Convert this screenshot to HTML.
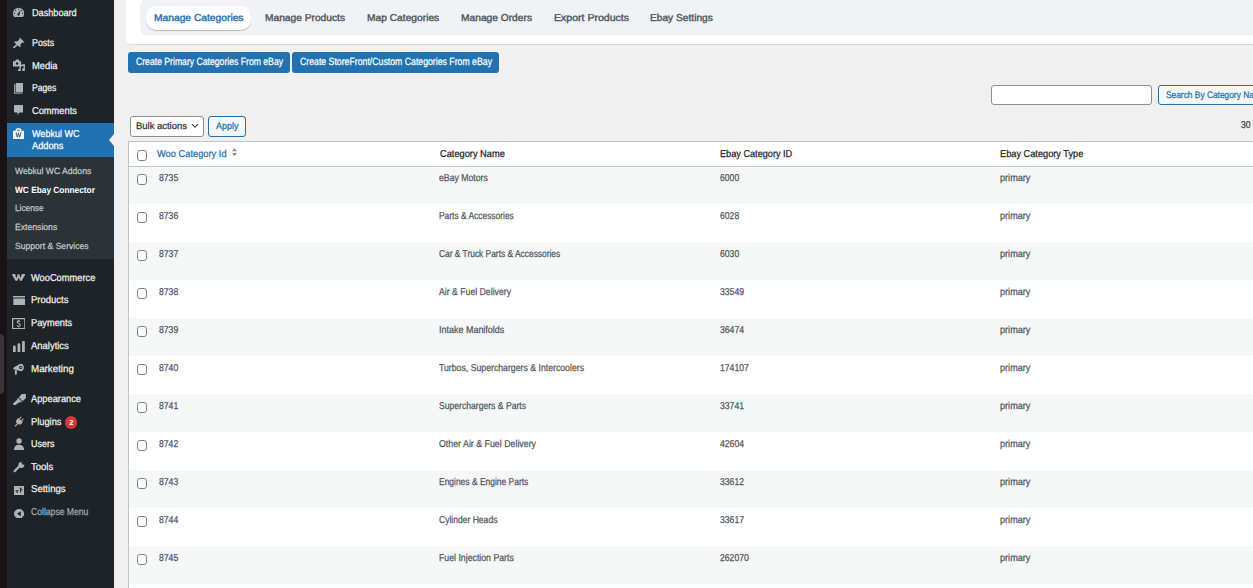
<!DOCTYPE html><html><head><meta charset="utf-8"><style>
*{margin:0;padding:0;box-sizing:border-box}
html,body{width:1253px;height:588px;overflow:hidden;background:#f0f0f1;font-family:"Liberation Sans", sans-serif;text-rendering:geometricPrecision}
.t{position:absolute;white-space:nowrap;-webkit-text-stroke:0.25px currentColor}
.ic{position:absolute;line-height:0}
.b{position:absolute}
svg{display:block}
</style></head><body><div class="b" style="left:0;top:0;width:6px;height:588px;background:#1a1115"></div><div class="b" style="left:0;top:334px;width:4px;height:60px;background:#3a3438;border-radius:0 4px 4px 0"></div><div class="b" style="left:6px;top:0;width:108px;height:588px;background:#1d2327"></div><div class="b" style="left:6px;top:0;width:1px;height:588px;background:#14181b"></div><div class="b" style="left:7px;top:122.5px;width:107px;height:34.5px;background:#2271b1"></div><div class="b" style="left:7px;top:157px;width:107px;height:102px;background:#2c3338"></div><div class="b" style="left:108.5px;top:134px;width:0;height:0;border-top:6px solid transparent;border-bottom:6px solid transparent;border-right:5.5px solid #f0f0f1"></div><div class="ic" style="left:13px;top:6.9px"><svg width="11.2" height="10" viewBox="0 0 20 18" preserveAspectRatio="none"><path fill="#b0b3b6" d="M2.2 18C.8 16.2 0 14 0 11.2A10 10 0 0 1 20 11.2C20 14 19.2 16.2 17.8 18Z"/><g fill="#1d2327"><circle cx="10" cy="3.6" r="1.1"/><circle cx="4.6" cy="6" r="1.1"/><circle cx="15.4" cy="6" r="1.1"/><circle cx="2.8" cy="11.2" r="1.1"/><circle cx="17.2" cy="11.2" r="1.1"/><path d="M13.8 5.2L11.6 13.4A1.9 1.9 0 1 1 8.4 12.2Z"/></g></svg></div><div class="t" style="left:31.6px;top:8.54px;font-size:10px;line-height:10px;color:#f0f0f1;font-weight:normal;transform:scaleX(0.9137);transform-origin:0 0;">Dashboard</div><div class="ic" style="left:12.6px;top:36.9px"><svg width="12.2" height="11.5" viewBox="0 0 20 20" preserveAspectRatio="none"><path fill="#b0b3b6" d="M11 1l8 8-2 1-1-1-4 4 .5 3.5L11 18l-3.5-3.5L2 20H0v-2l5.5-5.5L2 9l1.5-1.5L7 8l4-4-1-1z"/></svg></div><div class="t" style="left:31.6px;top:38.73px;font-size:10px;line-height:10px;color:#f0f0f1;font-weight:normal;transform:scaleX(0.8837);transform-origin:0 0;">Posts</div><div class="ic" style="left:12.75px;top:59px"><svg width="12.3" height="12.3" viewBox="0 0 20 20" preserveAspectRatio="none"><path fill="#b0b3b6" d="M0 3.5h3.2L5 1h4.2l1.8 2.5h2.2V12H0z"/><circle cx="6.6" cy="7.2" r="2" fill="#1d2327"/><path fill="#b0b3b6" d="M10.6 9.8L19.4 8.2V17.2A2.3 2.3 0 1 1 17.2 15.2V11.4L12.8 12.2V18A2.3 2.3 0 1 1 10.6 16z"/></svg></div><div class="t" style="left:31.6px;top:61.73px;font-size:10px;line-height:10px;color:#f0f0f1;font-weight:normal;transform:scaleX(0.9326);transform-origin:0 0;">Media</div><div class="ic" style="left:13.9px;top:83px"><svg width="9.3" height="11" viewBox="0 0 18 22" preserveAspectRatio="none"><path fill="#b0b3b6" d="M3.5 0H18V19H3.5z"/><path fill="#b0b3b6" d="M0 2.5H2.5V20.5H16V22H0z" opacity=".85"/></svg></div><div class="t" style="left:31.6px;top:84.03px;font-size:10px;line-height:10px;color:#f0f0f1;font-weight:normal;transform:scaleX(0.8605);transform-origin:0 0;">Pages</div><div class="ic" style="left:13.9px;top:104.8px"><svg width="9.3" height="10.3" viewBox="0 0 20 22" preserveAspectRatio="none"><path fill="#b0b3b6" d="M2 0H18A2 2 0 0 1 20 2V14A2 2 0 0 1 18 16H11.5L7.5 22V16H2A2 2 0 0 1 0 14V2A2 2 0 0 1 2 0z"/></svg></div><div class="t" style="left:31.6px;top:106.53px;font-size:10px;line-height:10px;color:#f0f0f1;font-weight:normal;transform:scaleX(0.9287);transform-origin:0 0;">Comments</div><div class="ic" style="left:13px;top:128.3px"><svg width="11" height="11" viewBox="0 0 20 20" preserveAspectRatio="none"><path fill="#f4f8fb" d="M4.5 5A5.5 4.8 0 0 1 15.5 5H20V20H0V5zM7.3 5H12.7A2.7 2.3 0 0 0 7.3 5z"/><path fill="#4d6376" d="M4.6 8.2H6.8L8 14.6L9.3 8.2H10.9L12.2 14.6L13.4 8.2H15.4L13.3 17H11.3L10.1 11.6L8.9 17H6.8z"/></svg></div><div class="t" style="left:31.6px;top:129.84px;font-size:10px;line-height:10px;color:#fff;font-weight:normal;transform:scaleX(0.9030);transform-origin:0 0;">Webkul WC</div><div class="t" style="left:31.6px;top:141.84px;font-size:10px;line-height:10px;color:#fff;font-weight:normal;transform:scaleX(0.9258);transform-origin:0 0;">Addons</div><div class="t" style="left:15.1px;top:167.38px;font-size:9px;line-height:9px;color:rgba(240,246,252,.7);font-weight:normal;transform:scaleX(0.9540);transform-origin:0 0;">Webkul WC Addons</div><div class="t" style="left:15.1px;top:186.38px;font-size:9px;line-height:9px;color:#fff;font-weight:bold;transform:scaleX(0.9236);transform-origin:0 0;-webkit-text-stroke:0;">WC Ebay Connector</div><div class="t" style="left:15.1px;top:204.38px;font-size:9px;line-height:9px;color:rgba(240,246,252,.7);font-weight:normal;transform:scaleX(0.9220);transform-origin:0 0;">License</div><div class="t" style="left:15.1px;top:223.38px;font-size:9px;line-height:9px;color:rgba(240,246,252,.7);font-weight:normal;transform:scaleX(0.9586);transform-origin:0 0;">Extensions</div><div class="t" style="left:15.1px;top:241.88px;font-size:9px;line-height:9px;color:rgba(240,246,252,.7);font-weight:normal;transform:scaleX(0.9554);transform-origin:0 0;">Support &amp; Services</div><div class="ic" style="left:11.8px;top:274px"><svg width="13.2" height="7" viewBox="0 0 26 14" preserveAspectRatio="none"><path fill="#b0b3b6" d="M.8 3.2C-.2 1.2.8 0 2.8 0H6.2L8.3 8.4L11.6 .6H14.8L16.2 8.4L19.6 0H24.6C25.8 0 26.2 1 25.6 2.2L19.2 13.4H15.6L13.6 6.8L10.4 13.4H7Z"/></svg></div><div class="t" style="left:31.4px;top:273.54px;font-size:10px;line-height:10px;color:#f0f0f1;font-weight:normal;transform:scaleX(0.9281);transform-origin:0 0;">WooCommerce</div><div class="ic" style="left:12.9px;top:296.2px"><svg width="12.5" height="8.9" viewBox="0 0 20 14" preserveAspectRatio="none"><path fill="#b0b3b6" d="M0 0H20V2.4H0zM.6 4H19.4V14H.6z"/></svg></div><div class="t" style="left:31.4px;top:296.34px;font-size:10px;line-height:10px;color:#f0f0f1;font-weight:normal;transform:scaleX(0.9477);transform-origin:0 0;">Products</div><div class="ic" style="left:11.7px;top:317.6px"><svg width="13.5" height="11.3" viewBox="0 0 24 20" preserveAspectRatio="none"><path fill="none" stroke="#b0b3b6" stroke-width="2.2" d="M1.1 1.1H22.9V18.9H1.1z"/><path fill="none" stroke="#b0b3b6" stroke-width="2" d="M14.2 6.3C13.6 5.6 12.8 5.2 11.8 5.2 10.2 5.2 9.2 6 9.2 7.2 9.2 9.9 14.8 9 14.8 12.2 14.8 13.6 13.6 14.6 11.8 14.6 10.6 14.6 9.6 14 9 13.2M12 3.4V5.2M12 14.6V16.4"/></svg></div><div class="t" style="left:31.4px;top:319.14px;font-size:10px;line-height:10px;color:#f0f0f1;font-weight:normal;transform:scaleX(0.9266);transform-origin:0 0;">Payments</div><div class="ic" style="left:12.8px;top:340.7px"><svg width="11.8" height="11.3" viewBox="0 0 20 19" preserveAspectRatio="none"><path fill="#b0b3b6" d="M0 10A2 2 0 0 1 4.6 10V19H0zM7.7 6A2.3 2.3 0 0 1 12.3 6V19H7.7zM15.4 2A2.3 2.3 0 0 1 20 2V19H15.4z"/></svg></div><div class="t" style="left:31.4px;top:341.54px;font-size:10px;line-height:10px;color:#f0f0f1;font-weight:normal;transform:scaleX(0.9446);transform-origin:0 0;">Analytics</div><div class="ic" style="left:12.8px;top:363.2px"><svg width="11.2" height="12.3" viewBox="0 0 20 22" preserveAspectRatio="none"><path fill="#b0b3b6" d="M0 9.5L2.5 7L13 1.5C16 .5 19.5 3.5 19.5 8S16 15.5 13 14.5L2.5 11.5ZM3 12.5L7.5 13.8 6.2 21.5H4z"/><circle cx="14" cy="8" r="3" fill="#1d2327"/><circle cx="14.3" cy="8" r="1.5" fill="#b0b3b6"/></svg></div><div class="t" style="left:31.4px;top:364.64px;font-size:10px;line-height:10px;color:#f0f0f1;font-weight:normal;transform:scaleX(0.9771);transform-origin:0 0;">Marketing</div><div class="ic" style="left:12.8px;top:393.6px"><svg width="12.9" height="11.3" viewBox="0 0 22 19" preserveAspectRatio="none"><path fill="#b0b3b6" d="M10 5.5L15.2 0H22V6.8L16.5 12zM9 6.6L15.4 13 13.6 14.2 11.4 13.4 4.2 18.6C3 19.4 1.4 19 .6 18 0 17 0 15.8 1 15L7.6 9.4 7.2 7.6z"/></svg></div><div class="t" style="left:31.4px;top:394.94px;font-size:10px;line-height:10px;color:#f0f0f1;font-weight:normal;transform:scaleX(0.9271);transform-origin:0 0;">Appearance</div><div class="ic" style="left:13.9px;top:416.1px"><svg width="10.1" height="11.3" viewBox="0 0 18 20" preserveAspectRatio="none"><g transform="rotate(40 9 10)"><path fill="#b0b3b6" d="M5.5 1H7.5V6H5.5zM10.5 1H12.5V6H10.5zM3.5 6H14.5V10C14.5 13 12 15 9 15S3.5 13 3.5 10z"/><path fill="#b0b3b6" d="M8 14.5H10V21H8z"/></g></svg></div><div class="t" style="left:31.4px;top:417.54px;font-size:10px;line-height:10px;color:#f0f0f1;font-weight:normal;transform:scaleX(0.9299);transform-origin:0 0;">Plugins</div><div class="ic" style="left:13.9px;top:438px"><svg width="10.1" height="12.4" viewBox="0 0 18 22" preserveAspectRatio="none"><circle cx="9" cy="5.2" r="4.8" fill="#b0b3b6"/><path fill="#b0b3b6" d="M0 22C0 15 3.5 12 9 12S18 15 18 22z"/></svg></div><div class="t" style="left:31.4px;top:440.14px;font-size:10px;line-height:10px;color:#f0f0f1;font-weight:normal;transform:scaleX(0.8961);transform-origin:0 0;">Users</div><div class="ic" style="left:12.8px;top:462.2px"><svg width="11.8" height="10.7" viewBox="0 0 22 20" preserveAspectRatio="none"><path fill="none" stroke="#b0b3b6" stroke-width="4.2" stroke-linecap="round" d="M3 17L11.5 8.5"/><circle cx="15.5" cy="5.5" r="5.5" fill="#b0b3b6"/><circle cx="19" cy="2" r="3" fill="#1d2327"/></svg></div><div class="t" style="left:31.4px;top:463.24px;font-size:10px;line-height:10px;color:#f0f0f1;font-weight:normal;transform:scaleX(0.9510);transform-origin:0 0;">Tools</div><div class="ic" style="left:13.9px;top:485.8px"><svg width="10.1" height="9" viewBox="0 0 20 18" preserveAspectRatio="none"><path fill="#b0b3b6" d="M0 0H20V18H0z"/><g fill="#1d2327"><path d="M3 8.5H9V10.5H3zM12 5H14V13H12zM14 6.5H17V8.5H14zM5 10.5H7V14H5z"/><circle cx="13" cy="4.5" r="1.7"/></g></svg></div><div class="t" style="left:31.4px;top:485.44px;font-size:10px;line-height:10px;color:#f0f0f1;font-weight:normal;transform:scaleX(0.9576);transform-origin:0 0;">Settings</div><div class="b" style="left:64.8px;top:416.4px;width:12.4px;height:12.4px;border-radius:50%;background:#d63638"></div><div class="t" style="left:69.2px;top:419.25px;font-size:7.5px;line-height:7.5px;color:#fff;font-weight:bold;-webkit-text-stroke:0;">2</div><div class="ic" style="left:13.9px;top:508.9px"><svg width="10.1" height="9.5" viewBox="0 0 20 20" preserveAspectRatio="none"><circle cx="10" cy="10" r="10" fill="#b0b3b6"/><path fill="#1d2327" d="M13.5 4.8V15.2L5.8 10z"/></svg></div><div class="t" style="left:31.4px;top:508.04px;font-size:10px;line-height:10px;color:#a7aaad;font-weight:normal;transform:scaleX(0.8605);transform-origin:0 0;">Collapse Menu</div><div class="b" style="left:126px;top:-10px;width:1140px;height:55px;background:#fff;border-bottom:1px solid #dcdcde;border-radius:0 0 5px 5px"></div><div class="b" style="left:140px;top:-1.5px;width:1130px;height:36px;background:#f1f2f5;border-radius:8px;border-bottom:1px solid #ebebef"></div><div class="b" style="left:146px;top:6px;width:105px;height:24px;background:#fff;border-radius:10px;box-shadow:0 1px 0.8px rgba(0,0,0,.22)"></div><div class="t" style="left:154px;top:13.54px;font-size:10px;line-height:10px;color:#2271b1;font-weight:normal;transform:scaleX(1.0255);transform-origin:0 0;-webkit-text-stroke:0.4px currentColor;">Manage Categories</div><div class="t" style="left:265.2px;top:13.54px;font-size:10px;line-height:10px;color:#50575e;font-weight:normal;transform:scaleX(1.0207);transform-origin:0 0;-webkit-text-stroke:0.4px currentColor;">Manage Products</div><div class="t" style="left:367.3px;top:13.54px;font-size:10px;line-height:10px;color:#50575e;font-weight:normal;transform:scaleX(1.0228);transform-origin:0 0;-webkit-text-stroke:0.4px currentColor;">Map Categories</div><div class="t" style="left:461px;top:13.54px;font-size:10px;line-height:10px;color:#50575e;font-weight:normal;transform:scaleX(1.0219);transform-origin:0 0;-webkit-text-stroke:0.4px currentColor;">Manage Orders</div><div class="t" style="left:553.7px;top:13.54px;font-size:10px;line-height:10px;color:#50575e;font-weight:normal;transform:scaleX(1.0542);transform-origin:0 0;-webkit-text-stroke:0.4px currentColor;">Export Products</div><div class="t" style="left:650.4px;top:13.54px;font-size:10px;line-height:10px;color:#50575e;font-weight:normal;transform:scaleX(1.0178);transform-origin:0 0;-webkit-text-stroke:0.4px currentColor;">Ebay Settings</div><div class="b" style="left:128px;top:52px;width:162px;height:20.7px;background:#2271b1;border-radius:3px"></div><div class="b" style="left:292px;top:52px;width:207px;height:20.7px;background:#2271b1;border-radius:3px"></div><div class="t" style="left:136px;top:57.21px;font-size:10.5px;line-height:10.5px;color:#fff;font-weight:normal;transform:scaleX(0.8233);transform-origin:0 0;">Create Primary Categories From eBay</div><div class="t" style="left:300px;top:57.21px;font-size:10.5px;line-height:10.5px;color:#fff;font-weight:normal;transform:scaleX(0.8309);transform-origin:0 0;">Create StoreFront/Custom Categories From eBay</div><div class="b" style="left:991px;top:85px;width:161px;height:20px;background:#fff;border:1px solid #8c8f94;border-radius:3px"></div><div class="b" style="left:1158px;top:85px;width:120px;height:20px;background:#f6f7f7;border:1px solid #2271b1;border-radius:3px"></div><div class="t" style="left:1165.8px;top:91.46px;font-size:9.5px;line-height:9.5px;color:#2271b1;font-weight:normal;transform:scaleX(0.8800);transform-origin:0 0;">Search By Category Name</div><div class="t" style="left:1241.4px;top:120.53px;font-size:10px;line-height:10px;color:#3c434a;font-weight:normal;transform:scaleX(0.8631);transform-origin:0 0;">30</div><div class="b" style="left:129.5px;top:116px;width:74px;height:20.5px;background:#fff;border:1px solid #8c8f94;border-radius:3px"></div><div class="t" style="left:135.6px;top:121.76px;font-size:9.5px;line-height:9.5px;color:#2c3338;font-weight:normal;transform:scaleX(0.9937);transform-origin:0 0;">Bulk actions</div><div class="ic" style="left:191px;top:123px"><svg width="8" height="6" viewBox="0 0 8 6"><path d="M1 1.2l3 3 3-3" fill="none" stroke="#3c434a" stroke-width="1.2"/></svg></div><div class="b" style="left:208.3px;top:116px;width:37.6px;height:20.5px;background:#f6f7f7;border:1px solid #2271b1;border-radius:3px"></div><div class="t" style="left:216.3px;top:121.76px;font-size:9.5px;line-height:9.5px;color:#2271b1;font-weight:normal;transform:scaleX(0.9426);transform-origin:0 0;">Apply</div><div class="b" style="left:128px;top:141px;width:1140px;height:460px;background:#fff;border:1px solid #c3c4c7"></div><div class="b" style="left:137px;top:150px;width:10px;height:10.8px;background:#fff;border:1px solid #7e8287;border-radius:3px"></div><div class="t" style="left:157.4px;top:149.63px;font-size:10px;line-height:10px;color:#2271b1;font-weight:normal;transform:scaleX(0.9298);transform-origin:0 0;">Woo Category Id</div><div class="ic" style="left:232px;top:147.8px"><svg width="5" height="8.2" viewBox="0 0 5 8.2"><path d="M0 3.2L2.5 0 5 3.2zM0 5L2.5 8.2 5 5z" fill="#8c8f94"/></svg></div><div class="t" style="left:439.6px;top:149.53px;font-size:10px;line-height:10px;color:#1d2327;font-weight:normal;transform:scaleX(0.9253);transform-origin:0 0;">Category Name</div><div class="t" style="left:719.8px;top:149.53px;font-size:10px;line-height:10px;color:#1d2327;font-weight:normal;transform:scaleX(0.9148);transform-origin:0 0;">Ebay Category ID</div><div class="t" style="left:999.8px;top:149.53px;font-size:10px;line-height:10px;color:#1d2327;font-weight:normal;transform:scaleX(0.9212);transform-origin:0 0;">Ebay Category Type</div><div class="b" style="left:129px;top:166.00px;width:1130px;height:38px;background:#f6f7f7"></div><div class="b" style="left:137px;top:174.3px;width:10px;height:10.8px;background:#fff;border:1px solid #7e8287;border-radius:3px"></div><div class="t" style="left:158.7px;top:173.53px;font-size:10px;line-height:10px;color:#50575e;font-weight:normal;transform:scaleX(0.8653);transform-origin:0 0;">8735</div><div class="t" style="left:439.3px;top:173.53px;font-size:10px;line-height:10px;color:#50575e;font-weight:normal;transform:scaleX(0.8694);transform-origin:0 0;">eBay Motors</div><div class="t" style="left:719.8px;top:173.53px;font-size:10px;line-height:10px;color:#50575e;font-weight:normal;transform:scaleX(0.8653);transform-origin:0 0;">6000</div><div class="t" style="left:999.8px;top:173.53px;font-size:10px;line-height:10px;color:#50575e;font-weight:normal;transform:scaleX(0.9119);transform-origin:0 0;">primary</div><div class="b" style="left:137px;top:212.3px;width:10px;height:10.8px;background:#fff;border:1px solid #7e8287;border-radius:3px"></div><div class="t" style="left:158.7px;top:211.53px;font-size:10px;line-height:10px;color:#50575e;font-weight:normal;transform:scaleX(0.8653);transform-origin:0 0;">8736</div><div class="t" style="left:439.3px;top:211.53px;font-size:10px;line-height:10px;color:#50575e;font-weight:normal;transform:scaleX(0.8412);transform-origin:0 0;">Parts &amp; Accessories</div><div class="t" style="left:719.8px;top:211.53px;font-size:10px;line-height:10px;color:#50575e;font-weight:normal;transform:scaleX(0.8653);transform-origin:0 0;">6028</div><div class="t" style="left:999.8px;top:211.53px;font-size:10px;line-height:10px;color:#50575e;font-weight:normal;transform:scaleX(0.9119);transform-origin:0 0;">primary</div><div class="b" style="left:129px;top:242.00px;width:1130px;height:38px;background:#f6f7f7"></div><div class="b" style="left:137px;top:250.3px;width:10px;height:10.8px;background:#fff;border:1px solid #7e8287;border-radius:3px"></div><div class="t" style="left:158.7px;top:249.53px;font-size:10px;line-height:10px;color:#50575e;font-weight:normal;transform:scaleX(0.8653);transform-origin:0 0;">8737</div><div class="t" style="left:439.3px;top:249.53px;font-size:10px;line-height:10px;color:#50575e;font-weight:normal;transform:scaleX(0.8388);transform-origin:0 0;">Car &amp; Truck Parts &amp; Accessories</div><div class="t" style="left:719.8px;top:249.53px;font-size:10px;line-height:10px;color:#50575e;font-weight:normal;transform:scaleX(0.8653);transform-origin:0 0;">6030</div><div class="t" style="left:999.8px;top:249.53px;font-size:10px;line-height:10px;color:#50575e;font-weight:normal;transform:scaleX(0.9119);transform-origin:0 0;">primary</div><div class="b" style="left:137px;top:288.3px;width:10px;height:10.8px;background:#fff;border:1px solid #7e8287;border-radius:3px"></div><div class="t" style="left:158.7px;top:287.54px;font-size:10px;line-height:10px;color:#50575e;font-weight:normal;transform:scaleX(0.8653);transform-origin:0 0;">8738</div><div class="t" style="left:439.3px;top:287.54px;font-size:10px;line-height:10px;color:#50575e;font-weight:normal;transform:scaleX(0.8696);transform-origin:0 0;">Air &amp; Fuel Delivery</div><div class="t" style="left:719.8px;top:287.54px;font-size:10px;line-height:10px;color:#50575e;font-weight:normal;transform:scaleX(0.8653);transform-origin:0 0;">33549</div><div class="t" style="left:999.8px;top:287.54px;font-size:10px;line-height:10px;color:#50575e;font-weight:normal;transform:scaleX(0.9119);transform-origin:0 0;">primary</div><div class="b" style="left:129px;top:318.00px;width:1130px;height:38px;background:#f6f7f7"></div><div class="b" style="left:137px;top:326.3px;width:10px;height:10.8px;background:#fff;border:1px solid #7e8287;border-radius:3px"></div><div class="t" style="left:158.7px;top:325.54px;font-size:10px;line-height:10px;color:#50575e;font-weight:normal;transform:scaleX(0.8653);transform-origin:0 0;">8739</div><div class="t" style="left:439.3px;top:325.54px;font-size:10px;line-height:10px;color:#50575e;font-weight:normal;transform:scaleX(0.8968);transform-origin:0 0;">Intake Manifolds</div><div class="t" style="left:719.8px;top:325.54px;font-size:10px;line-height:10px;color:#50575e;font-weight:normal;transform:scaleX(0.8653);transform-origin:0 0;">36474</div><div class="t" style="left:999.8px;top:325.54px;font-size:10px;line-height:10px;color:#50575e;font-weight:normal;transform:scaleX(0.9119);transform-origin:0 0;">primary</div><div class="b" style="left:137px;top:364.3px;width:10px;height:10.8px;background:#fff;border:1px solid #7e8287;border-radius:3px"></div><div class="t" style="left:158.7px;top:363.54px;font-size:10px;line-height:10px;color:#50575e;font-weight:normal;transform:scaleX(0.8653);transform-origin:0 0;">8740</div><div class="t" style="left:439.3px;top:363.54px;font-size:10px;line-height:10px;color:#50575e;font-weight:normal;transform:scaleX(0.8715);transform-origin:0 0;">Turbos, Superchargers &amp; Intercoolers</div><div class="t" style="left:719.8px;top:363.54px;font-size:10px;line-height:10px;color:#50575e;font-weight:normal;transform:scaleX(0.8653);transform-origin:0 0;">174107</div><div class="t" style="left:999.8px;top:363.54px;font-size:10px;line-height:10px;color:#50575e;font-weight:normal;transform:scaleX(0.9119);transform-origin:0 0;">primary</div><div class="b" style="left:129px;top:394.00px;width:1130px;height:38px;background:#f6f7f7"></div><div class="b" style="left:137px;top:402.3px;width:10px;height:10.8px;background:#fff;border:1px solid #7e8287;border-radius:3px"></div><div class="t" style="left:158.7px;top:401.54px;font-size:10px;line-height:10px;color:#50575e;font-weight:normal;transform:scaleX(0.8653);transform-origin:0 0;">8741</div><div class="t" style="left:439.3px;top:401.54px;font-size:10px;line-height:10px;color:#50575e;font-weight:normal;transform:scaleX(0.8600);transform-origin:0 0;">Superchargers &amp; Parts</div><div class="t" style="left:719.8px;top:401.54px;font-size:10px;line-height:10px;color:#50575e;font-weight:normal;transform:scaleX(0.8653);transform-origin:0 0;">33741</div><div class="t" style="left:999.8px;top:401.54px;font-size:10px;line-height:10px;color:#50575e;font-weight:normal;transform:scaleX(0.9119);transform-origin:0 0;">primary</div><div class="b" style="left:137px;top:440.3px;width:10px;height:10.8px;background:#fff;border:1px solid #7e8287;border-radius:3px"></div><div class="t" style="left:158.7px;top:439.54px;font-size:10px;line-height:10px;color:#50575e;font-weight:normal;transform:scaleX(0.8653);transform-origin:0 0;">8742</div><div class="t" style="left:439.3px;top:439.54px;font-size:10px;line-height:10px;color:#50575e;font-weight:normal;transform:scaleX(0.8815);transform-origin:0 0;">Other Air &amp; Fuel Delivery</div><div class="t" style="left:719.8px;top:439.54px;font-size:10px;line-height:10px;color:#50575e;font-weight:normal;transform:scaleX(0.8653);transform-origin:0 0;">42604</div><div class="t" style="left:999.8px;top:439.54px;font-size:10px;line-height:10px;color:#50575e;font-weight:normal;transform:scaleX(0.9119);transform-origin:0 0;">primary</div><div class="b" style="left:129px;top:470.00px;width:1130px;height:38px;background:#f6f7f7"></div><div class="b" style="left:137px;top:478.3px;width:10px;height:10.8px;background:#fff;border:1px solid #7e8287;border-radius:3px"></div><div class="t" style="left:158.7px;top:477.54px;font-size:10px;line-height:10px;color:#50575e;font-weight:normal;transform:scaleX(0.8653);transform-origin:0 0;">8743</div><div class="t" style="left:439.3px;top:477.54px;font-size:10px;line-height:10px;color:#50575e;font-weight:normal;transform:scaleX(0.8455);transform-origin:0 0;">Engines &amp; Engine Parts</div><div class="t" style="left:719.8px;top:477.54px;font-size:10px;line-height:10px;color:#50575e;font-weight:normal;transform:scaleX(0.8653);transform-origin:0 0;">33612</div><div class="t" style="left:999.8px;top:477.54px;font-size:10px;line-height:10px;color:#50575e;font-weight:normal;transform:scaleX(0.9119);transform-origin:0 0;">primary</div><div class="b" style="left:137px;top:516.3px;width:10px;height:10.8px;background:#fff;border:1px solid #7e8287;border-radius:3px"></div><div class="t" style="left:158.7px;top:515.53px;font-size:10px;line-height:10px;color:#50575e;font-weight:normal;transform:scaleX(0.8653);transform-origin:0 0;">8744</div><div class="t" style="left:439.3px;top:515.53px;font-size:10px;line-height:10px;color:#50575e;font-weight:normal;transform:scaleX(0.8542);transform-origin:0 0;">Cylinder Heads</div><div class="t" style="left:719.8px;top:515.53px;font-size:10px;line-height:10px;color:#50575e;font-weight:normal;transform:scaleX(0.8653);transform-origin:0 0;">33617</div><div class="t" style="left:999.8px;top:515.53px;font-size:10px;line-height:10px;color:#50575e;font-weight:normal;transform:scaleX(0.9119);transform-origin:0 0;">primary</div><div class="b" style="left:129px;top:546.00px;width:1130px;height:38px;background:#f6f7f7"></div><div class="b" style="left:137px;top:554.3px;width:10px;height:10.8px;background:#fff;border:1px solid #7e8287;border-radius:3px"></div><div class="t" style="left:158.7px;top:553.53px;font-size:10px;line-height:10px;color:#50575e;font-weight:normal;transform:scaleX(0.8653);transform-origin:0 0;">8745</div><div class="t" style="left:439.3px;top:553.53px;font-size:10px;line-height:10px;color:#50575e;font-weight:normal;transform:scaleX(0.8739);transform-origin:0 0;">Fuel Injection Parts</div><div class="t" style="left:719.8px;top:553.53px;font-size:10px;line-height:10px;color:#50575e;font-weight:normal;transform:scaleX(0.8653);transform-origin:0 0;">262070</div><div class="t" style="left:999.8px;top:553.53px;font-size:10px;line-height:10px;color:#50575e;font-weight:normal;transform:scaleX(0.9119);transform-origin:0 0;">primary</div><div class="b" style="left:129px;top:166px;width:1140px;height:1px;background:#c3c4c7"></div></body></html>
